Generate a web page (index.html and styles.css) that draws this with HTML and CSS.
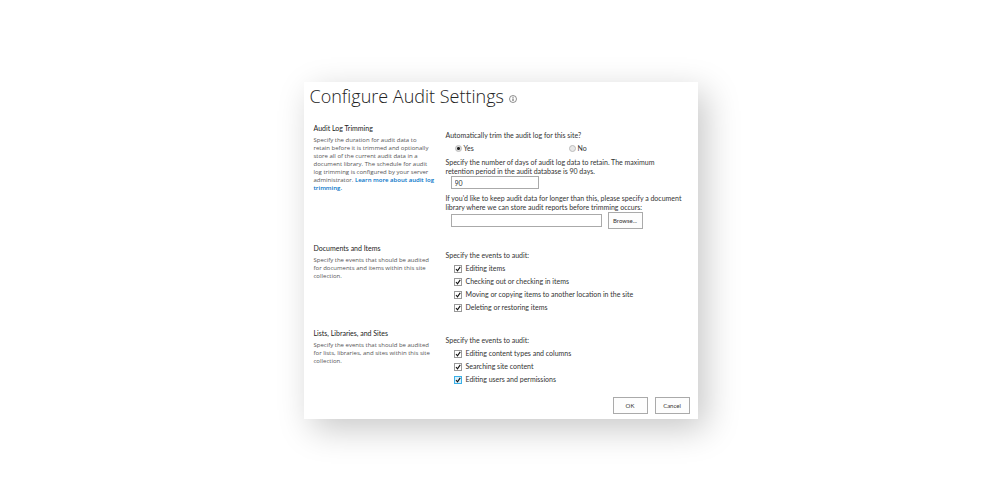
FILE: index.html
```html
<!DOCTYPE html>
<html lang="en">
<head>
    <meta charset="UTF-8">
    <meta name="viewport" content="width=device-width, initial-scale=1.0">
    <title>Configure Audit Settings</title>
    <link rel="stylesheet" href="styles.css">
</head>
<body>

    <form class="card">
        <h1>
            Configure Audit Settings
            <svg class="info" viewBox="0 0 16 16" aria-hidden="true">
                <circle cx="8" cy="8" r="7" fill="none" stroke="#555" stroke-width="1.3"/>
                <rect x="7" y="3.6" width="2" height="1.8" fill="#444"/>
                <path d="M8 7v5" fill="none" stroke="#444" stroke-width="1.8"/>
            </svg>
        </h1>

        <section class="row">
            <div class="about">
                <h2>Audit Log Trimming</h2>
                <p>Specify the duration for audit data to<br>retain before it is trimmed and optionally<br>store all of the current audit data in a<br>document library. The schedule for audit<br>log trimming is configured by your server<br>administrator. <a href="#">Learn more about audit log<br>trimming.</a></p>
            </div>
            <div class="fields">
                <p>Automatically trim the audit log for this site?</p>
                <div class="radios">
                    <label><input type="radio" name="trim" checked>Yes</label>
                    <label><input type="radio" name="trim">No</label>
                </div>
                <label class="text" for="days">Specify the number of days of audit log data to retain. The maximum<br>retention period in the audit database is 90 days.</label>
                <input class="box days" type="text" id="days" value="90">
                <label class="text" for="library">If you'd like to keep audit data for longer than this, please specify a document<br>library where we can store audit reports before trimming occurs:</label>
                <div class="browse">
                    <input class="box library" type="text" id="library">
                    <button type="button">Browse...</button>
                </div>
            </div>
        </section>

        <section class="row">
            <div class="about">
                <h2>Documents and Items</h2>
                <p>Specify the events that should be audited<br>for documents and items within this site<br>collection.</p>
            </div>
            <div class="fields">
                <p>Specify the events to audit:</p>
                <div class="checks">
                    <label><input type="checkbox" checked>Editing items</label>
                    <label><input type="checkbox" checked>Checking out or checking in items</label>
                    <label><input type="checkbox" checked>Moving or copying items to another location in the site</label>
                    <label><input type="checkbox" checked>Deleting or restoring items</label>
                </div>
            </div>
        </section>

        <section class="row">
            <div class="about">
                <h2>Lists, Libraries, and Sites</h2>
                <p>Specify the events that should be audited<br>for lists, libraries, and sites within this site<br>collection.</p>
            </div>
            <div class="fields">
                <p>Specify the events to audit:</p>
                <div class="checks">
                    <label><input type="checkbox" checked>Editing content types and columns</label>
                    <label><input type="checkbox" checked>Searching site content</label>
                    <label><input class="active" type="checkbox" checked>Editing users and permissions</label>
                </div>
            </div>
        </section>

        <div class="actions">
            <button type="button">OK</button>
            <button type="button">Cancel</button>
        </div>
    </form>

</body>
</html>
```
FILE: styles.css
```css
* {
    box-sizing: border-box;
}

body {
    margin: 0;
    min-height: 100vh;
    display: flex;
    align-items: center;
    justify-content: center;
    background: #fff;
    color: #333;
    font-family: Lato, "Noto Sans", sans-serif;
    font-size: 7px;
    line-height: 9px;
}

.card {
    width: 39%;
    min-width: 394px;
    padding: 2px 8px 5px 6px;
    background: #fff;
    box-shadow: 8px 10px 32px rgba(0, 0, 0, 0.22);
}

h1 {
    display: flex;
    align-items: center;
    gap: 5px;
    margin: 0 0 16px;
    font-family: "Open Sans", "Noto Sans", sans-serif;
    font-size: 18px;
    font-weight: 300;
    line-height: 24px;
    color: #222;
}

.info {
    width: 8px;
    height: 8px;
    margin-top: 5px;
}

h2 {
    margin: 0 0 4px;
    font-size: 7px;
    font-weight: 400;
    line-height: 8px;
    color: #222;
}

p {
    margin: 0;
}

.row {
    display: grid;
    grid-template-columns: 132px 1fr;
    margin-left: 4px;
    margin-bottom: 15px;
}

.row:nth-last-child(2) {
    margin-bottom: 11px;
}

.about p {
    color: #555;
    font-family: "Open Sans", "Noto Sans", sans-serif;
    font-size: 6px;
    line-height: 8px;
}

.about a {
    color: #0072c6;
    font-weight: 600;
    text-decoration: none;
}

.fields {
    padding-top: 7px;
}

label {
    display: flex;
    align-items: center;
}

label.text {
    display: block;
}

.radios {
    display: flex;
    margin: 4px 0 5px 9px;
}

.radios label {
    width: 114px;
}

input {
    appearance: none;
    flex: none;
    margin: 0;
    color: #333;
    font: inherit;
}

input[type="radio"] {
    width: 7px;
    height: 7px;
    margin-right: 2px;
    border: 1px solid #bbb;
    border-radius: 50%;
    background: #e8e8e8;
}

input[type="radio"]:checked {
    background: radial-gradient(circle, #222 0 1px, #ddd 2px);
}

.box {
    display: block;
    height: 13px;
    margin-left: 5px;
    padding: 0 3px;
    border: 1px solid #aaa;
    background: #fff;
}

.days {
    width: 88px;
    margin-bottom: 5px;
}

.library {
    width: 151px;
}

.browse {
    display: flex;
    align-items: center;
    gap: 6px;
}

button {
    width: 35px;
    height: 17px;
    padding: 0;
    border: 1px solid #aaa;
    background: #fdfdfd;
    color: #333;
    font: inherit;
    font-size: 6px;
}

.checks {
    margin: 2px 0 0 8px;
}

.checks label {
    height: 13px;
}

input[type="checkbox"] {
    width: 8px;
    height: 8px;
    margin-right: 4px;
    border: 1px solid #999;
    background: #fff url("data:image/svg+xml,%3Csvg xmlns='http://www.w3.org/2000/svg' viewBox='0 0 8 8'%3E%3Cpath d='M1.3 4l2 2.4L7 1.2' fill='none' stroke='%23111' stroke-width='1.5'/%3E%3C/svg%3E") center / 6px no-repeat;
}

input[type="checkbox"].active {
    border-color: #3ab0e8;
    background-color: #d8f0fc;
}

.actions {
    display: flex;
    justify-content: flex-end;
    gap: 7px;
}
```
